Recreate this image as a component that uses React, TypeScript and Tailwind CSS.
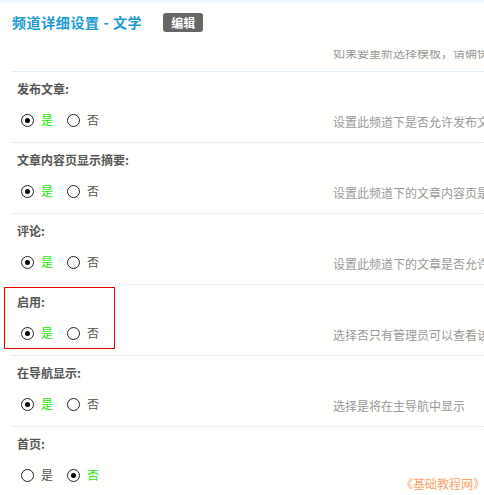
import React from "react";

const font = { fontFamily: '"Noto Sans CJK SC", "Noto Sans", sans-serif' };

function Radio({ checked, label }: { checked: boolean; label: string }) {
  return (
    <div className="flex items-center">
      <div className="w-[13px] h-[13px] rounded-full border border-[#222] flex items-center justify-center bg-white">
        {checked && <div className="w-[5px] h-[5px] rounded-full bg-black" />}
      </div>
      <span
        className={
          "ml-[7px] text-[12px] leading-[16px] " +
          (checked ? "text-[#22e800]" : "text-[#555]")
        }
      >
        {label}
      </span>
    </div>
  );
}

type Row = { label: string; yes: boolean; desc: string; boxed?: boolean };

const rows: Row[] = [
  { label: "发布文章:", yes: true, desc: "设置此频道下是否允许发布文章" },
  { label: "文章内容页显示摘要:", yes: true, desc: "设置此频道下的文章内容页是否显示摘要" },
  { label: "评论:", yes: true, desc: "设置此频道下的文章是否允许评论" },
  { label: "启用:", yes: true, desc: "选择否只有管理员可以查看该频道", boxed: true },
  { label: "在导航显示:", yes: true, desc: "选择是将在主导航中显示" },
  { label: "首页:", yes: false, desc: "" },
];

export default function App() {
  return (
    <div
      className="relative w-[484px] h-[495px] overflow-hidden bg-[#fffffd]"
      style={font}
    >
      <div className="h-[3px] bg-[#f2f8ff]" />
      <div className="h-[68px] pl-[12px] pt-[10px]">
        <div className="flex items-center h-[19px]">
          <span className="text-[14px] leading-[19px] font-bold text-[#1b9ad6] whitespace-nowrap tracking-[0.6px]">
            频道详细设置 - 文学
          </span>
          <span className="ml-[21px] h-[19px] px-[8px] rounded-[3px] bg-[#666] text-white text-[12px] leading-[19px] font-bold">
            编辑
          </span>
        </div>
        <div className="mt-[18px] h-[21px] overflow-hidden pl-[321px]">
          <div className="-mt-[5px] text-[12px] leading-[16px] text-[#999] whitespace-nowrap">
            如果要重新选择模板，请确保模板文件存在
          </div>
        </div>
      </div>
      <div className="pl-[11px]">
        {rows.map((r, i) => (
          <div
            key={i}
            className="h-[71px] border-t border-dotted border-[#c8e3f5] flex"
          >
            <div className="w-[322px] shrink-0 relative">
              {r.boxed && (
                <div className="absolute left-[-7px] top-[2px] w-[111px] h-[62px] border border-[#e00000]" />
              )}
              <div className="pl-[6px] pt-[9px] text-[12px] leading-[16px] font-bold text-[#555] whitespace-nowrap">
                {r.label}
              </div>
              <div className="flex items-center pl-[10px] mt-[15px] gap-[14px]">
                <Radio checked={r.yes} label="是" />
                <Radio checked={!r.yes} label="否" />
              </div>
            </div>
            <div className="pt-[42px] text-[12px] leading-[16px] text-[#999] whitespace-nowrap">
              {r.desc}
            </div>
          </div>
        ))}
      </div>
      <div className="absolute left-[401px] top-[476px] text-[12px] leading-[16px] text-[#f6a56e] whitespace-nowrap">
        《基础教程网》
      </div>
    </div>
  );
}
